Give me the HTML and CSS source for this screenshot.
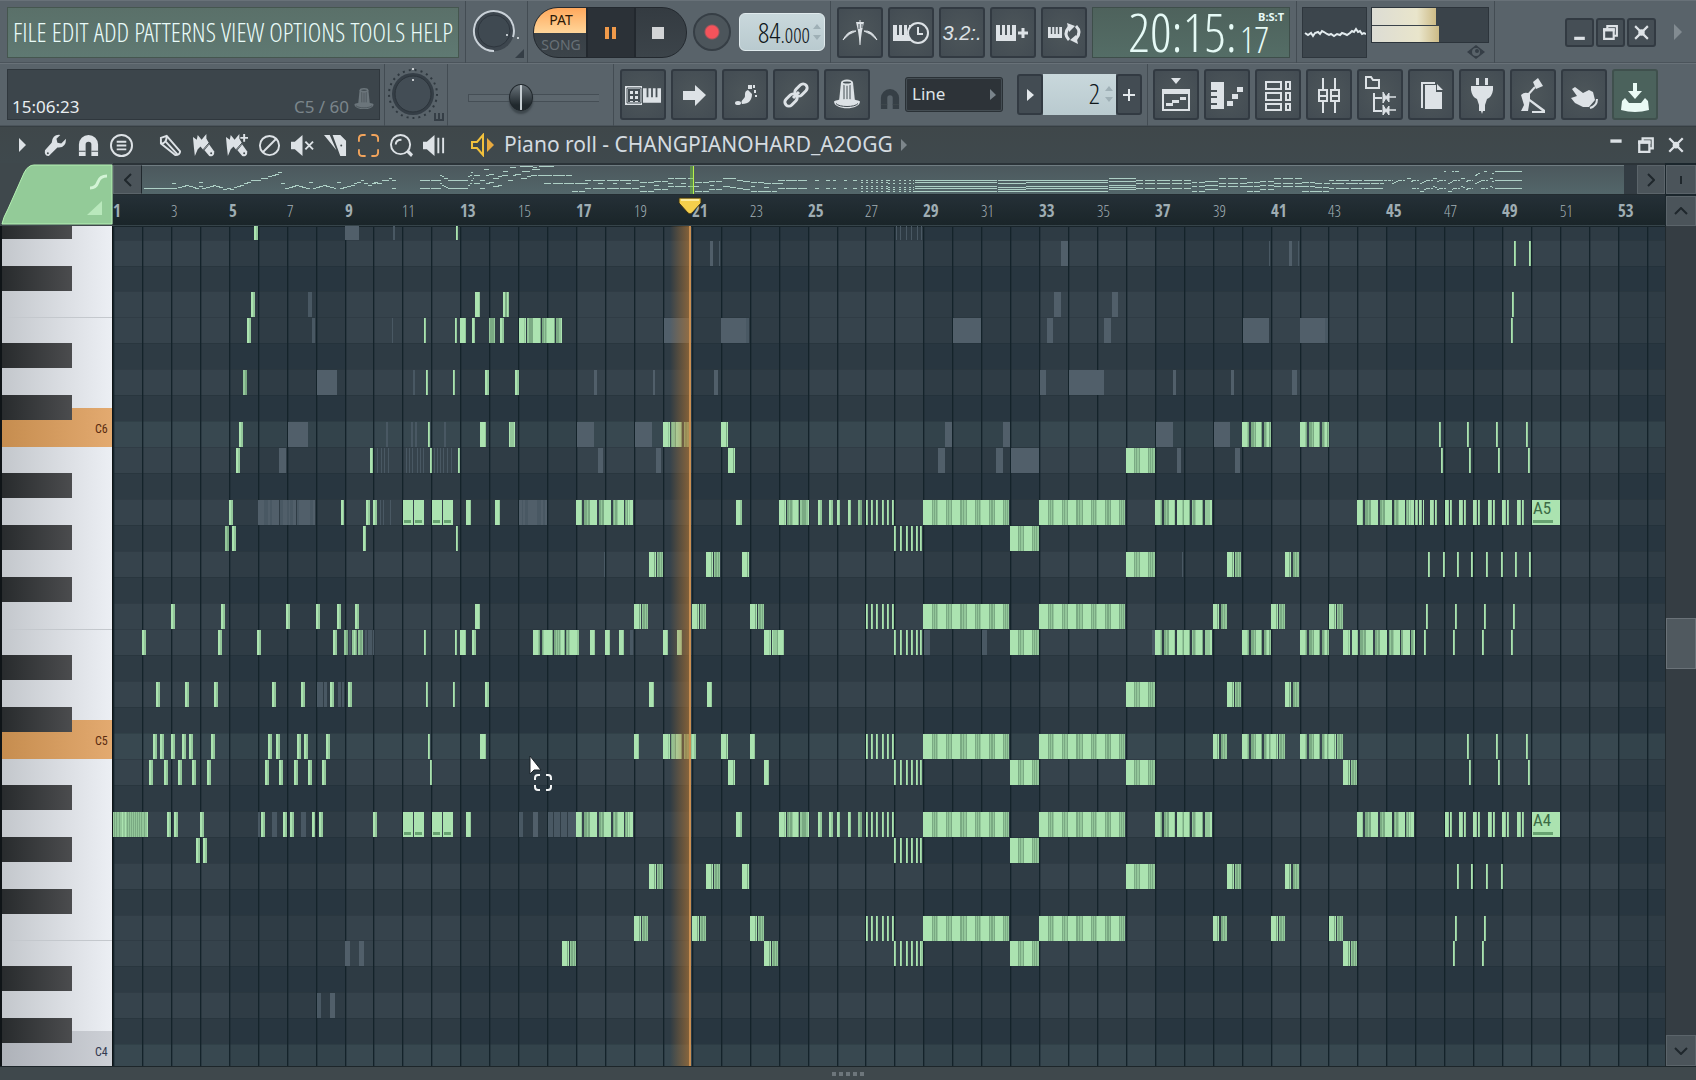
FILE: index.html
```html
<!DOCTYPE html>
<html lang="en">
<head>
<meta charset="utf-8">
<title>Piano roll - CHANGPIANOHARD_A2OGG</title>
<link rel="stylesheet" href="styles.css">
</head>
<body>
<svg class="sprite" aria-hidden="true">
  <symbol id="i-keys" viewBox="0 0 20 16"><path d="M0 0h4v10h2V0h3v10h2V0h3v10h2V0h4v16H0z"/></symbol>
  <symbol id="i-min" viewBox="0 0 16 16"><path d="M3 12h10v3H3z"/></symbol>
  <symbol id="i-max" viewBox="0 0 16 16"><path d="M2 5h9v9H2zM5 4V2h9v9h-2" fill="none" stroke="currentColor" stroke-width="2"/><path d="M1 4h11v3H1z"/></symbol>
  <symbol id="i-close" viewBox="0 0 16 16"><path d="M2 2l12 12M14 2L2 14" stroke="currentColor" stroke-width="2"/><circle cx="8" cy="8" r="3"/></symbol>
  <symbol id="i-magnet" viewBox="0 0 22 24"><path d="M1 23V11a10 10 0 0 1 20 0v12h-7V11a3 3 0 0 0-6 0v12z"/><path d="M1 18h7M14 18h7" stroke="#3f484d" stroke-width="1"/></symbol>
  <symbol id="i-hat" viewBox="0 0 30 32"><path d="M9 4l-2 19h16L21 4z"/><path d="M12 6v15M15 7v14M18 6v15" stroke="#454e54" stroke-width="1"/><ellipse cx="15" cy="4" rx="6" ry="3"/><ellipse cx="15" cy="4" rx="4" ry="1" fill="#454e54"/><path d="M2 23c3-3 23-3 26 0 0 9-26 9-26 0z"/><path d="M4 25c3 4 19 4 22 0" fill="none" stroke="#454e54"/></symbol>
  <symbol id="i-brush" viewBox="0 0 24 24"><path d="M1 3l4 3 1-5 4 5 5-6v7l-9 9-3 7-1-9z"/><path d="M8 12l7-7 3 5-6 7z"/><path d="M13 17l5-6 5 7c1 4-2 6-5 5z"/><path d="M11 17l7-8" stroke="#3f484c" stroke-width="1"/><circle cx="20" cy="20" r="1" fill="#3f484c"/></symbol>
  <symbol id="i-frame" viewBox="0 0 22 24"><path d="M1 8V5q0-4 4-4h3M14 1h3q4 0 4 4v3M21 16v3q0 4-4 4h-3M8 23H5q-4 0-4-4v-3" fill="none" stroke="currentColor" stroke-width="2"/></symbol>
</svg>

<header class="topbar">
  <div class="bar">
    <section class="cell cell-menu">
      <nav class="menu">
        <button>FILE</button><button>EDIT</button><button>ADD</button><button>PATTERNS</button><button>VIEW</button><button>OPTIONS</button><button>TOOLS</button><button>HELP</button>
      </nav>
    </section>
    <section class="cell cell-volume">
      <svg width="60" height="60" role="img" aria-label="Main volume"><circle cx="28" cy="30" r="20" fill="#3d464e"/><circle cx="28" cy="30" r="16" fill="#3f4951" stroke="#2e363e"/><path d="M28 50A20 20 0 1 1 47 36" fill="none" stroke="#c9d1d8" stroke-width="2"/><circle cx="41" cy="34" r="1" fill="#e8eef2"/><circle cx="52" cy="37" r="1" fill="#e8eef2"/><path d="M58 48v9h-9z" fill="#353e46"/></svg>
    </section>
    <section class="cell cell-transport">
      <div class="pod">
        <div class="mode"><button class="mode-pat">PAT</button><button class="mode-song">SONG</button></div>
        <button class="pod-btn pod-pause" aria-label="Pause"><svg width="12" height="12"><path d="M0 0h4v12H0zM7 0h4v12H7z" fill="#f09a4a"/></svg></button>
        <button class="pod-btn pod-stop" aria-label="Stop"><svg width="12" height="12"><path d="M0 0h12v12H0z" fill="#d2d4d6"/></svg></button>
      </div>
      <button class="record" aria-label="Record"></button>
      <div class="tempo" role="spinbutton" aria-label="Tempo" aria-valuenow="84"><span class="tempo-int">84</span><span class="tempo-dec">.000</span><svg width="8" height="16"><path d="M0 5l4-5 4 5zM0 11l4 5 4-5z" fill="#9fb0b6"/></svg></div>
    </section>
    <section class="cell cell-tools">
      <button class="tool" aria-label="Metronome"><svg viewBox="0 0 46 50"><path d="M6 32q5-10 13-9-7 2-13 9zM40 32q-5-10-13-9 7 2 13 9z" stroke="currentColor"/><path d="M19 14h8l-2 9-2 14-2-14z"/><path d="M23 12v25" stroke="currentColor"/><path d="M22 16v5M25 16v4" stroke="#454e54"/></svg></button>
      <button class="tool" aria-label="Wait for input"><svg viewBox="0 0 46 50"><use href="#i-keys" x="5" y="17" width="20" height="16"/><circle cx="30" cy="25" r="10" fill="#454e54" stroke="currentColor" stroke-width="2"/><path d="M30 19v7h5" fill="none" stroke="currentColor" stroke-width="2"/></svg></button>
      <button class="tool tool-count" aria-label="Countdown">3.2:.</button>
      <button class="tool" aria-label="Overdub"><svg viewBox="0 0 46 50"><use href="#i-keys" x="6" y="16" width="20" height="18"/><path d="M33 20v10M28 25h10" stroke="currentColor" stroke-width="3"/></svg></button>
      <button class="tool" aria-label="Loop record"><svg viewBox="0 0 46 50"><use href="#i-keys" x="7" y="17" width="14" height="15"/><path d="M28 32q-6-6 0-13M35 18q6 6 0 13" fill="none" stroke="currentColor" stroke-width="3"/><path d="M26 15l8 3-6 6zM37 36l-8-4 6-5z"/></svg></button>
      <div class="clock"><span class="clock-main">20:15:</span><span class="clock-side"><span class="clock-unit">B:S:T</span><span class="clock-sub">17</span></span></div>
    </section>
    <section class="cell cell-meters">
      <svg class="scope" width="65" height="51" role="img" aria-label="Oscilloscope"><path d="M2 25l3 2 3-2 2 3 2-3 3-1 2 2 2-3 2 1 3 2 2 1 2-1 3 2 3-2 3 1 2-2 3 1 2 1 3-2 2-2 2 1 2-3 2 3 2-1 2 3 2-1 2 1" fill="none" stroke="#e3ebee" stroke-width="2"/></svg>
      <div class="levels"><div class="level-box"><div class="level" style="width:55%"></div><div class="level" style="width:58%"></div></div>
      <svg width="18" height="14"><path d="M0 7l9-7 9 7-9 7z" fill="#353e46"/><circle cx="9" cy="7" r="4" fill="#59636a"/><circle cx="10" cy="6" r="2" fill="#353e46"/></svg></div>
    </section>
    <section class="cell cell-window">
      <button class="win" aria-label="Minimize"><svg viewBox="0 0 16 16"><use href="#i-min"/></svg></button>
      <button class="win" aria-label="Restore"><svg viewBox="0 0 16 16"><use href="#i-max"/></svg></button>
      <button class="win" aria-label="Close"><svg viewBox="0 0 16 16"><use href="#i-close"/></svg></button>
      <svg class="more" width="8" height="16"><path d="M0 0l8 8-8 8z" fill="#828b91"/></svg>
    </section>
  </div>

  <div class="bar bar-low">
    <section class="cell cell-hint">
      <div class="hint"><span class="hint-time">15:06:23</span><span class="hint-note">C5 / 60</span><svg class="hint-hat" width="22" height="28" viewBox="0 0 30 32"><use href="#i-hat"/></svg></div>
    </section>
    <section class="cell cell-pitch">
      <svg width="62" height="62" role="img" aria-label="Main pitch"><circle cx="28" cy="30" r="24" fill="none" stroke="#2f383f" stroke-width="2" stroke-dasharray="2 4"/><circle cx="28" cy="30" r="21" fill="#353e46"/><circle cx="28" cy="30" r="18" fill="#434d55" stroke="#2b333a"/><circle cx="28" cy="16" r="1" fill="#f2f5f7"/><circle cx="28" cy="5" r="1" fill="#f2f5f7"/><path d="M50 49v7h8v-7M54 49v7" fill="none" stroke="#353e46" stroke-width="2"/></svg>
    </section>
    <section class="cell cell-slider"><input class="slider" type="range" min="0" max="100" value="38" aria-label="Song position"></section>
    <section class="cell cell-edit">
      <button class="tool" aria-label="Typing keyboard"><svg viewBox="0 0 46 50"><path d="M5 16h17v19H5z"/><path d="M8 20h12M8 25h12M8 30h12M9 19v13M14 19v13M19 19v13" stroke="#454e54" stroke-width="2"/><path d="M7 18h14v15H7z" fill="none" stroke="#454e54"/><use href="#i-keys" x="23" y="16" width="18" height="19"/></svg></button>
      <button class="tool" aria-label="Step mode"><svg viewBox="0 0 46 50"><path d="M12 21h12v-6l11 10-11 11v-6H12z"/></svg></button>
      <button class="tool" aria-label="Step edit"><svg viewBox="0 0 46 50"><ellipse cx="16" cy="33" rx="3" ry="2"/><path d="M20 34c-2-4 3-5 3-8s0-5 3-6l4 4c0 6-3 10-10 10z"/><path d="M26 15h4v4h-4zM31 15h2v3h-2zM32 20h2v3h-2zM33 25h2v2h-2z"/></svg></button>
      <button class="tool" aria-label="Link"><svg viewBox="0 0 46 50"><g fill="none" stroke="currentColor" stroke-width="3"><rect x="-7" y="-4" width="14" height="8" rx="4" transform="translate(18 30) rotate(-45)"/><rect x="-7" y="-4" width="14" height="8" rx="4" transform="translate(28 20) rotate(-45)"/></g><path d="M20 28l6-6" stroke="currentColor" stroke-width="3"/></svg></button>
      <button class="tool" aria-label="Hat"><svg viewBox="0 0 46 50"><use href="#i-hat" x="8" y="8" width="30" height="33"/></svg></button>
      <svg class="snap-icon" width="20" height="22" viewBox="0 0 22 24"><use href="#i-magnet"/></svg>
      <label class="snap"><select aria-label="Snap"><option>Line</option></select><svg width="6" height="11"><path d="M0 0l6 6-6 5z" fill="#79838a"/></svg></label>
      <div class="pattern"><button class="pattern-btn" aria-label="Pattern menu"><svg width="7" height="12"><path d="M0 0l7 6-7 6z" fill="#e3e8eb"/></svg></button><input class="pattern-num" value="2" aria-label="Pattern"><svg class="pattern-spin" width="8" height="16"><path d="M0 5l4-5 4 5zM0 11l4 5 4-5z" fill="#9fb0b6"/></svg><button class="pattern-btn" aria-label="Add pattern"><svg width="12" height="12"><path d="M6 0v12M0 6h12" stroke="#e3e8eb" stroke-width="2"/></svg></button></div>
    </section>
    <section class="cell cell-views">
      <button class="tool" aria-label="Playlist"><svg viewBox="0 0 46 50"><path d="M18 8h10l-5 6zM9 19h28v5H9z"/><path d="M10 20h26v20H10z" fill="none" stroke="currentColor" stroke-width="2"/><path d="M13 33h7v3h-7zM19 30h7v3h-7zM27 27h6v3h-6z"/></svg></button>
      <button class="tool" aria-label="Piano roll"><svg viewBox="0 0 46 50"><path d="M7 12h13v27H7v-4h6v-2H7v-5h6v-2H7v-4h6v-2H7z"/><path d="M23 31h6v5h-6zM28 24h6v5h-6zM33 17h6v5h-6z"/></svg></button>
      <button class="tool" aria-label="Channel rack"><svg viewBox="0 0 46 50"><path d="M11 12h15v7H11zM31 12h4v7h-4zM11 23h15v7H11zM31 23h4v7h-4zM11 34h15v6H11zM31 34h4v6h-4z" fill="none" stroke="currentColor" stroke-width="2"/></svg></button>
      <button class="tool" aria-label="Mixer"><svg viewBox="0 0 46 50"><path d="M17 8v12M29 8v12M17 32v11M29 32v11M13 20h8v11h-8zM25 20h8v11h-8zM14 26h6M26 26h6" fill="none" stroke="currentColor" stroke-width="2"/></svg></button>
      <button class="tool" aria-label="Browser"><svg viewBox="0 0 46 50"><path d="M9 7h5l2 3h6v8H9zM17 23v19M17 28h8M17 41h8" fill="none" stroke="currentColor" stroke-width="2"/><path d="M26 22l3 5 3-4v4h7-7v5l-3-4-3 5zM26 35l3 5 3-4v4h7-7v5l-3-4-3 4z" stroke="currentColor"/></svg></button>
      <button class="tool" aria-label="Project files"><svg viewBox="0 0 46 50"><path d="M14 38V13h13" fill="none" stroke="currentColor" stroke-width="2"/><path d="M17 15h11v7h6v17H17zM29 14l6 6h-6z"/></svg></button>
      <button class="tool" aria-label="Plugin picker"><svg viewBox="0 0 46 50"><path d="M17 8h3v7h-3zM26 8h3v7h-3zM12 16h22v4q-1 7-6 9l-2 6v6h-2l-1 3-1-3h-2v-6l-2-6q-5-2-6-9z"/></svg></button>
      <button class="tool" aria-label="Performance"><svg viewBox="0 0 46 50"><path d="M23 12l5-4 5 8-7 3z"/><path d="M25 17l-9 10" stroke="currentColor" stroke-width="2"/><path d="M11 25q4-4 9-1v5l-2 12h-7l3-6zM20 29l15 11v3H22v-2h10L19 31z"/></svg></button>
      <button class="tool" aria-label="Touch control"><svg viewBox="0 0 46 50"><path d="M11 19l3-2 8 6 6-3 4 2 2 8-6 7h-6l-8-4-4-5 6-2z"/><path d="M29 38q7-2 7-9" fill="none" stroke="currentColor" stroke-width="2"/></svg></button>
      <button class="tool tool-save" aria-label="Save"><svg viewBox="0 0 46 50"><path d="M21 13h4v8h5l-7 8-7-8h5zM10 31l3-3 4 5h12l4-5 3 3 1 9q-14 4-28 0z"/></svg></button>
    </section>
  </div>
</header>

<div class="titlebar">
  <svg class="t-arrow" width="7" height="14"><path d="M0 0l7 7-7 7z"/></svg>
  <div class="t-group t-group-a">
    <button aria-label="Tools"><svg viewBox="0 0 24 24"><path d="M23 5l-5 5-4-1-1-4 4-4q-8-1-9 8l-7 8q-1 6 4 6l9-9q9 1 9-9z"/><circle cx="4" cy="20" r="1" fill="#3f484c"/></svg></button>
    <button aria-label="Snap"><svg viewBox="0 0 22 24"><use href="#i-magnet"/></svg></button>
    <button aria-label="Options"><svg viewBox="0 0 24 24"><circle cx="12" cy="12" r="11" fill="none" stroke="currentColor" stroke-width="2"/><path d="M7 8h10M7 12h10M7 16h10" stroke="currentColor" stroke-width="2"/></svg></button>
  </div>
  <div class="t-group t-group-b">
    <button aria-label="Draw"><svg viewBox="0 0 24 24"><path d="M2 4l6-2 14 16q0 4-5 4L2 10zM2 10q6 0 6-8M7 8l12 13" fill="none" stroke="currentColor" stroke-width="2"/></svg></button>
    <button aria-label="Paint"><svg viewBox="0 0 24 24"><use href="#i-brush"/></svg></button>
    <button aria-label="Paint sequence"><svg viewBox="0 0 24 24"><use href="#i-brush"/><path d="M20 0v8M16 4h8" stroke="currentColor" stroke-width="2"/></svg></button>
    <button aria-label="Delete"><svg viewBox="0 0 24 24"><circle cx="12" cy="12" r="10" fill="none" stroke="currentColor" stroke-width="2"/><path d="M5 19L19 5" stroke="currentColor" stroke-width="2"/></svg></button>
    <button aria-label="Mute"><svg viewBox="0 0 24 24"><path d="M0 8h4l8-7v22l-8-7H0z"/><path d="M15 8l8 8M23 8l-8 8" stroke="currentColor" stroke-width="2"/></svg></button>
    <button aria-label="Slice"><svg viewBox="0 0 24 24"><path d="M0 1h6l7 16zM9 1h8l6 6v16h-6z"/><circle cx="18" cy="12" r="1" fill="#3f484c"/></svg></button>
    <button class="t-on" aria-label="Select"><svg viewBox="0 0 22 24"><use href="#i-frame"/></svg></button>
    <button aria-label="Zoom"><svg viewBox="0 0 24 24"><circle cx="11" cy="11" r="10" fill="none" stroke="currentColor" stroke-width="2"/><path d="M6 11q0-5 6-5" fill="none" stroke="currentColor" stroke-width="2"/><path d="M17 19l3-2 4 4-2 3z"/></svg></button>
    <button aria-label="Playback"><svg viewBox="0 0 24 24"><path d="M0 8h4l8-7v22l-8-7H0z"/><path d="M16 4v16M21 4v16" stroke="currentColor" stroke-width="2"/></svg></button>
  </div>
  <svg class="t-speaker" width="24" height="24" viewBox="0 0 24 24"><path d="M1 9h5l6-7v20l-6-7H1z" fill="none" stroke="#f2c13c" stroke-width="2"/><path d="M16 5l7 7-7 7z" fill="#e8a93f"/></svg>
  <h1>Piano roll - CHANGPIANOHARD_A2OGG</h1>
  <svg class="t-next" width="6" height="12"><path d="M0 0l6 6-6 6z" fill="#7d868b"/></svg>
  <div class="t-window">
    <button aria-label="Minimize roll"><svg viewBox="0 0 16 16"><path d="M3 3h10v3H3z"/></svg></button>
    <button aria-label="Restore roll"><svg viewBox="0 0 16 16"><use href="#i-max"/></svg></button>
    <button aria-label="Close roll"><svg viewBox="0 0 16 16"><use href="#i-close"/></svg></button>
  </div>
</div>

<main class="roll">
  <div class="corner"><svg width="113" height="62"><path d="M2 61Q3 55 8 46L24 10Q28 2 34 2H112V61z" fill="#93cb98" stroke="#b5f2b4" stroke-width="1"/><path d="M90 25q6 0 8-6t9-6" fill="none" stroke="#d3f4d6" stroke-width="3"/><path d="M102 38v14H87z" fill="#b9e8bc"/></svg></div>
  <div class="scroll-h">
    <button class="sb sb-prev" aria-label="Scroll left"><svg width="8" height="14"><path d="M7 1L1 7l6 6"/></svg></button>
    <div class="minimap"><svg id="minimap" width="100%" height="29"></svg></div>
    <button class="sb" aria-label="Scroll right"><svg width="8" height="14"><path d="M1 1l6 6-6 6"/></svg></button>
  </div>
  <button class="sb sb-zoom" aria-label="Zoom"><svg width="4" height="8"><path d="M2 0v8"/></svg></button>
  <div class="ruler" id="ruler"></div>
  <button class="sb" aria-label="Scroll up"><svg width="14" height="8"><path d="M1 7l6-6 6 6"/></svg></button>
  <svg class="keys" id="keys"></svg>
  <div class="grid"><svg id="grid" width="100%" height="840"></svg>
    <div class="playhead"></div>
    <svg class="cursor" width="26" height="40"><path d="M2 1v18l4-4 7 0z" fill="#fff" stroke="#1c252b" stroke-width="1"/><path d="M7 25v-2q0-3 3-3h2M18 20h2q3 0 3 3v2M23 30v2q0 3-3 3h-2M12 35h-2q-3 0-3-3v-2" fill="none" stroke="#f3f5f6" stroke-width="2"/></svg>
  </div>
  <div class="scroll-v"><div class="thumb"></div><button class="sb" aria-label="Scroll down"><svg width="14" height="8"><path d="M1 1l6 6 6-6"/></svg></button></div>
</main>
<footer class="grip"><i></i><i></i><i></i><i></i><i></i></footer>
<script src="roll.js"></script>
</body>
</html>
```
FILE: styles.css
```css
:root {
  --cond: "Open Sans Condensed Light", "Roboto Condensed", "Noto Sans Condensed", "Liberation Sans Narrow", "Open Sans Condensed", sans-serif;
  --cond-bold: "Open Sans Condensed", "Roboto Condensed", "Liberation Sans Narrow", sans-serif;
  --key: "Roboto Condensed", "Liberation Sans Narrow", "Roboto", sans-serif;
  --ui: "Noto Sans", "Open Sans", sans-serif;
  --line: #434c53;
  --icon: #dde2e6;
}
* { box-sizing: border-box; }
body { margin: 0; min-height: 100vh; display: flex; flex-direction: column; background: #3f484c; font-family: var(--ui); color: var(--icon); overflow: hidden; }
button { border: 0; padding: 0; margin: 0; background: none; color: inherit; font: inherit; display: flex; align-items: center; justify-content: center; }
svg { display: block; fill: currentColor; flex: none; }
.sprite { position: absolute; width: 0; height: 0; }

.topbar { background: #59636a; }
.bar { display: flex; height: 63px; border-top: 1px solid #687178; }
.cell { display: flex; align-items: flex-start; border-right: 1px solid var(--line); box-shadow: inset 0 -1px #4b545b; flex: none; padding-top: 6px; }
.bar-low .cell { padding-top: 5px; }
.cell-menu { width: 466px; padding-left: 7px; }
.bar .cell-volume, .bar .cell-pitch { padding-top: 0; }
.cell-volume { width: 62px; }
.cell-transport { width: 303px; padding-left: 5px; }
.cell-tools { width: 466px; padding-left: 6px; gap: 5px; }
.cell-meters { width: 198px; padding-left: 5px; gap: 4px; }
.cell-window { flex: 1; justify-content: flex-end; align-items: center; padding: 0 14px 0 0; gap: 2px; border-right: 0; }
.cell-hint { width: 385px; padding-left: 7px; }
.cell-pitch { width: 63px; }
.cell-slider { width: 166px; padding: 0 14px 0 20px; align-items: center; }
.cell-edit { width: 534px; padding-left: 6px; gap: 5px; }
.cell-views { flex: 1; padding-left: 5px; gap: 5px; border-right: 0; }

.menu { width: 452px; height: 51px; background: linear-gradient(#5a7069, #5f7972); border: 1px solid #45564f; display: flex; align-items: center; justify-content: space-between; padding: 0 5px 2px; color: #e9fbf8; font: 26px/32px var(--cond); }

.pod { display: flex; width: 154px; height: 51px; border-radius: 25px; overflow: hidden; background: linear-gradient(#343b41, #3c444a); border: 1px solid #23292f; }
.mode { width: 52px; display: flex; flex-direction: column; }
.mode button { flex: 1; font-size: 14px; line-height: 18px; padding-left: 2px; }
.mode .mode-pat { background: linear-gradient(#ffa85c, #ffd69a); color: #2c1a08; }
.mode .mode-song { color: #687076; }
.pod-btn { width: 48px; border-left: 2px solid #22282e; }
.pod-stop { flex: 1; padding-right: 6px; }
.pod-pause { background: #2b3137; }
.record { width: 38px; height: 38px; margin: 6px 8px 0 6px; border-radius: 50%; border: 2px solid #363e45; background: radial-gradient(circle at center, #f5535b 6px, #4c555b 8px); }
.tempo { width: 86px; height: 38px; margin-top: 6px; border-radius: 6px; background: linear-gradient(#c9d8dc, #b9cacf); border: 1px solid #e0eaed; color: #10171b; font-family: var(--cond); display: flex; align-items: baseline; justify-content: flex-end; padding-right: 3px; }
.tempo-int { font-size: 28px; line-height: 36px; }
.tempo-dec { font-size: 21px; line-height: 36px; margin-right: 3px; }
.tempo svg { align-self: center; }

.tool { width: 46px; height: 51px; flex: none; border: 2px solid #323a42; border-radius: 3px; background: radial-gradient(#4d565a, #434c53); }
.tool svg { width: 46px; height: 50px; }
.tool-count { font: italic 20px/24px "Liberation Sans", sans-serif; }
.tool-save { background: #4b625c; border-color: #3f504d; color: #eafaf5; }

.clock { width: 198px; height: 51px; background: linear-gradient(#4e625c, #546d66); border: 1px solid #3e4e4a; color: #e6faf6; font-family: var(--cond); display: flex; justify-content: flex-end; padding-right: 5px; }
.clock-main { font-size: 54px; line-height: 46px; margin-right: 3px; }
.clock-side { display: flex; flex-direction: column; width: 44px; }
.clock-unit { font: 700 11px/14px var(--ui); text-align: right; padding-top: 2px; }
.clock-sub { font-size: 36px; line-height: 32px; }

.scope { background: #3c454c; border: 1px solid #2e363d; }
.levels { width: 118px; display: flex; flex-direction: column; align-items: flex-end; gap: 2px; }
.levels svg { margin-right: 4px; }
.level-box { width: 118px; height: 36px; background: #3a434a; border: 1px solid #2c343b; display: flex; flex-direction: column; gap: 1px; }
.level { flex: 1; background: linear-gradient(90deg, #dcdcd4, #e9e5cb 70%, #cdbb86); }
.win { width: 29px; height: 29px; border: 2px solid #323a42; border-radius: 3px; background: #454e55; }
.win svg { width: 17px; height: 17px; }
.more { margin-left: 16px; }

.hint { width: 373px; height: 51px; background: #3c454b; border: 1px solid #2f373d; display: flex; align-items: flex-end; padding: 0 4px 1px; font-size: 17px; line-height: 22px; }
.hint-time { flex: 1; color: #e8edf0; }
.hint-note { color: #7b858b; }
.hint-hat { color: #6b757b; margin: 0 0 5px 4px; }
.slider { appearance: none; width: 100%; height: 40px; margin: 0; background: linear-gradient(#5d676e, #5d676e) center / 130px 6px no-repeat, linear-gradient(#454e55, #454e55) center / 132px 8px no-repeat; }
.slider::-webkit-slider-thumb { appearance: none; width: 24px; height: 27px; border-radius: 50%; border: 1px solid #20272c; background: linear-gradient(90deg, transparent 10px, #c6ced3 10px, #c6ced3 12px, transparent 12px), linear-gradient(#69737a, #20282d 80%); box-shadow: 0 3px 2px #3e474d; }
.snap-icon { color: #363f46; margin: 19px 0 0 5px; }
.snap { position: relative; width: 98px; height: 35px; margin-top: 8px; }
.snap select { appearance: none; width: 100%; height: 100%; background: #2d3338; border: 2px solid #444d53; outline: 1px solid #2a3136; outline-offset: -1px; border-radius: 3px; color: #dfe4e7; font: 17px/20px var(--ui); padding: 0 5px 2px; }
.snap svg { position: absolute; right: 7px; top: 12px; }
.pattern { position: relative; display: flex; margin: 5px 0 0 9px; height: 41px; }
.pattern-btn { width: 26px; background: #434c53; border: 2px solid #323a42; border-radius: 3px; }
.pattern-num { width: 73px; border: 0; background: linear-gradient(#c9d8dc, #b9cacf); color: #10171b; font: 28px/32px var(--cond); text-align: right; padding: 0 16px 3px 0; }
.pattern-spin { position: absolute; right: 29px; top: 12px; }

.titlebar { height: 37px; display: flex; align-items: center; background: linear-gradient(#3f474a, #3f494d); border-top: 1px solid #363e42; }
.titlebar button { width: 24px; height: 24px; }
.titlebar button svg { width: 23px; height: 23px; }
.t-arrow { margin: 0 22px 0 19px; }
.t-group { display: flex; }
.t-group-a { gap: 9px; margin-right: 25px; margin-left: -5px; }
.t-group-b { gap: 9px; margin-right: 25px; }
.titlebar .t-on { color: #f2a45c; }
.titlebar h1 { margin: 0 8px 2px 9px; font: 21px/26px var(--ui); color: #d4dbe0; white-space: nowrap; }
.t-window { margin-left: auto; display: flex; gap: 6px; padding-right: 8px; }
.titlebar .t-window svg { width: 18px; height: 18px; }

.roll { flex: 1 0 0; min-height: 0; display: grid; grid-template-columns: 113px 1fr 31px; grid-template-rows: 32px 31px 1fr; background: #1b262c; }
.corner { grid-row: 1 / 3; background: #3f484c; }
.scroll-h { display: flex; background: #333c43; border-top: 2px solid #2b3338; border-bottom: 1px solid #232c31; }
.sb { background: #4b545a; border: 1px solid #5b646a; width: 28px; height: 29px; flex: none; }
.sb svg { fill: none; stroke: #1f272c; stroke-width: 2; }
.sb-prev { border-right-color: #20282d; width: 29px; }
.minimap { flex: 1; margin-right: 13px; background: linear-gradient(#4c585d, #53666a); border-top: 1px solid #707d82; overflow: hidden; }
.roll > .sb { width: 30px; margin: 1px; height: 30px; }
.roll > .sb-zoom { margin-top: 2px; height: 29px; }
.ruler { position: relative; overflow: hidden; background: linear-gradient(#253037, #1a2529); border-bottom: 1px solid #36444a; }
.ruler span { position: absolute; bottom: 0; color: #a3b0b6; font: 16px/28px var(--cond); }
.ruler .major { color: #9fadb3; font: 17px/28px var(--cond-bold); }
.marker { position: absolute; left: 565px; top: 2px; }
.keys { width: 113px; height: 100%; background: #0f1417; }
.grid { position: relative; overflow: hidden; background: #2f3c45; }
.playhead { position: absolute; left: 557px; top: 0; width: 21px; height: 100%; background: linear-gradient(90deg, rgba(176, 122, 56, 0), rgba(176, 116, 50, .65)); border-right: 2px solid #c98f52; }
.cursor { position: absolute; left: 415px; top: 529px; }
.scroll-v { display: flex; flex-direction: column; justify-content: flex-end; position: relative; background: #353d43; border-left: 1px solid #20292e; }
.scroll-v .sb { width: 30px; height: 31px; }
.thumb { position: absolute; left: 0; top: 392px; width: 30px; height: 51px; background: #50595f; border: 1px solid #6a7278; }
.grip { height: 14px; display: flex; align-items: center; justify-content: center; gap: 3px; border-top: 1px solid #1d262a; }
.grip i { width: 4px; height: 4px; background: #6d767b; }

.label-key { font: 12px var(--key); }
.label-note { font: 17px var(--key); fill: #3c6b45; }
```
FILE: roll.js
```js
const NS = 'http://www.w3.org/2000/svg';
const KEYS_W = 113, BAR = 28.94, ROW = 25.96, TOP = -12.4, ROWS = 33;
const COLORS = { L: '#abe3b0', m: '#93c79a', d: '#7aaa83', g: '#515f6a', h: '#495863' };

function rect(parent, x, y, w, h, fill) {
  const r = document.createElementNS(NS, 'rect');
  r.setAttribute('x', x); r.setAttribute('y', y);
  r.setAttribute('width', w); r.setAttribute('height', h);
  r.setAttribute('fill', fill);
  parent.appendChild(r);
  return r;
}
function text(parent, x, y, cls, str, fill) {
  const t = document.createElementNS(NS, 'text');
  t.setAttribute('x', x); t.setAttribute('y', y);
  t.setAttribute('class', cls);
  if (fill) t.setAttribute('fill', fill);
  t.textContent = str;
  parent.appendChild(t);
}
const rowY = r => Math.round(TOP + r * ROW);
const barX = b => Math.round(b * BAR);
// Rows count down from G#6; C sits on rows 8, 20 and 32.
const pitch = r => (((8 - r) % 12) + 12) % 12;
const isBlack = r => [1, 3, 6, 8, 10].includes(pitch(r));

// Phrases: each letter is a shade and the number its width; a dot is a rest.
const P = {
  n: 'L2m2', n3: 'L2m1', n5: 'L4m1', n6: 'L5m1', n7: 'L5d1L1', d4: 'm2d2', t: 'L1m1',
  half: 'L5d1L1.1m1d2m1d1m1', halfb: 'L4d1L1.2d2m1d1m2',
  bar: 'L5m1d1.2d3m1d1L5d1.2d2m1L2d1m1',
  solid: 'L8d1m1d1m2d1L8d1m1d1m1d1m2',
  long: 'L9d1m1d1m1d1m1L8d1m1d1m2d1L8d2m1d1m2d1L8d1m1d1m1d1m1L8d1m1d2m1d1L8d1m1d1m1d1m1',
  two: 'L5m1.2d3m1d2L7.2d2m1d2L7.2d1m1d2m1L6.1d1m1d1L1m1L3',
  two2: 'L5m1d1.2d2m1d2L5m1.2L5m1d1L5d1.2m1d2m1L6d1.2m5L2',
  run: 'L5m1L1.1d2m1d2m1L5d1.1m2d4m2L1',
  eight: 'L1m1.3L1m1.3L1m1.4L1m1.3L1m1.3L1m1',
  ten: 'L1m1.4L1m1.4L1m1.3L1m1.3L1m1.2L1m1',
};
const g = w => 'g' + w;
const A_COMMON = [[576, 'two'], [736, 'L4m2'], [779, 'run'], [818, 'n'], [829, 'n'], [837, 'n3'], [848, 'n3'], [858, 'd4'], [866, 'eight'], [923, 'long'], [1039, 'long'], [1155, 'two2']];
const pair = x => [x, 'L3m1.1L1m1'];
const ticks = (...xs) => xs.map(x => [x, 't']);
const hits = (...xs) => xs.map(x => [x, 'n']);
const greys = (...xs) => xs.map(x => [x, 'h1']);

const DATA = {
  '-9': [[508, 'L14'], [528, 'L16']], '-8': [[497, 'L6']], '-7': [[522, 'L4']], '-4': [[470, 'L5'], [520, 'L8']], '-2': [[490, 'L5'], [510, 'L8']],
  '-1': [[1532, 'L28'], [1478, 'L2'], [1486, 'L2'], [1490, 'L4'], [1520, 'L3']],
  0: [[254, 'n'], [345, g(14)], [393, 'h2'], [456, 't'], ...greys(896, 900, 906, 911, 917, 921)],
  1: [[710, g(3)], [719, 'h1'], [1061, g(7)], [1269, 'h1'], [1289, g(3)], [1298, 'h1'], ...ticks(1514, 1529)],
  3: [[251, 'n'], [308, 'h4'], [475, 'n5'], [503, 'L2d2L1m1'], [1054, g(7)], [1112, g(6)], [1512, 't']],
  4: [[247, 'n'], [312, 'h3'], [392, 'h1'], [424, 't'], [455, 't'], [460, 'n6'], [472, 'n3'], [489, 'm1d4m1'], [500, 'n'], [519, 'L5m1L1.1m2d4L7d1.1d2m1d1m1L7d1.1d3m2L1'], [664, g(26)], [721, 'g25h3'], [953, g(28)], [1047, g(6)], [1104, g(7)], [1243, g(26)], [1300, 'g25h3'], [1511, 't']],
  6: [[243, 'd4'], [317, g(20)], [413, 'h2'], [426, 't'], [453, 't'], [485, 'n'], [515, 'n'], [594, g(3)], [653, g(2)], [714, g(4)], [1040, g(6)], [1069, g(35)], [1173, g(3)], [1231, g(3)], [1292, g(5)]],
  8: [[239, 'n'], [288, g(20)], [386, 'h2'], [411, 'h2'], [415, 'h2'], [428, 't'], [444, 'h2'], [480, 'n6'], [509, 'L1m4L1'], [577, g(17)], [635, g(17)], [663, 'L5m1L1.1d1m3d1L5d1.2m1d2m2'], [721, 'n7'], [945, g(7)], [1003, g(7)], [1156, g(17)], [1214, g(16)], [1242, 'bar'], [1300, 'bar'], ...ticks(1439, 1467, 1496, 1526)],
  9: [[236, 'n'], [279, g(7)], [370, 'n3'], ...greys(377, 381, 384, 388, 406, 409, 412, 417, 420, 423, 434, 437, 440, 443, 447, 451), [430, 't'], [458, 't'], [598, g(5)], [656, g(5)], [728, 'n7'], [938, g(7)], [996, g(7)], [1011, g(28)], [1126, 'solid'], [1177, g(4)], [1235, g(5)], ...ticks(1441, 1469, 1498, 1528)],
  11: [[229, 'n'], [258, 'g6h4g2h2g7.1h3g4h2g1h3g3.1h2g11h3g2'], [341, 'n3'], [366, 'n'], [373, 'n'], ...greys(380, 383, 390), [466, 'n5'], [495, 'n5'], [519, 'g3h1g2h3g9h4g2h2g2'], ...A_COMMON, [1357, 'two'], [1415, 'm1L1m1.1L2m1.1L1'], ...[1430, 1445, 1459, 1473, 1488, 1502, 1517].map(pair)],
  12: [[225, 'd4'], [232, 'n'], [363, 'n3'], [456, 't'], [894, 'ten'], [1010, 'solid']],
  13: [[604, 'h1'], [649, 'half'], [706, 'half'], [742, 'n7'], [1126, 'solid'], [1182, 'h1'], [1227, 'half'], [1285, 'halfb'], ...ticks(1428, 1443, 1457, 1471, 1486, 1501, 1515, 1529)],
  15: [...hits(171, 221, 286, 316, 337, 355), [475, 'n5'], [634, 'half'], [692, 'half'], [750, 'half'], [866, 'eight'], [923, 'long'], [1039, 'long'], [1213, 'halfb'], [1271, 'half'], [1329, 'half'], ...ticks(1426, 1455, 1484, 1513)],
  16: [...hits(142, 218, 257, 333), [344, 'm2d2.1h2.1m2L1m1d1.1m2d2m1'], [365, 'h2.1h4.1h1'], [424, 't'], [455, 't'], [460, 'n6'], [472, 'n'], [533, 'L5m1d1.2d1m1L8d1.1d2m1d1m1d1m1L3d1.1d1m1d1m1L7m2'], [590, 'n5'], [605, 'n5'], [619, 'n5'], [630, 'h3'], [663, 'n5'], [677, 'n5'], [764, 'L5m1L1.1L1m4d1L5m1'], [894, 'ten'], [924, 'h6'], [982, 'h5'], [1010, 'solid'], [1152, 'h3'], [1155, 'two2'], [1242, 'bar'], [1300, 'bar'], [1343, 'L5m1L1.1'], [1352, 'two'], [1402, 'd1L7.1d2m1L1'], ...ticks(1424, 1453, 1482, 1511)],
  18: [...hits(156, 185, 214, 272, 301), [317, 'h6.1h3.2'], [338, 'h3.1h2'], ...hits(330, 348), [426, 't'], [453, 't'], [485, 'n'], [649, 'n5'], [707, 'n5'], [1126, 'solid'], [1227, 'half'], [1285, 'halfb']],
  20: [...hits(153, 160, 171, 182, 189, 211, 268, 276, 297, 304, 326), [428, 't'], [480, 'n6'], [634, 'n5'], [663, 'L5m1L1.1d1m3d1L5d1.2m1d2m5L2m2'], [721, 'n7'], [750, 'n5'], [866, 'eight'], [923, 'long'], [1039, 'long'], [1213, 'halfb'], [1242, 'bar'], [1271, 'half'], [1300, 'bar'], [1329, 'half'], ...ticks(1467, 1496, 1526)],
  21: [...hits(149, 164, 178, 192, 207, 265, 279, 294, 308, 322), [430, 't'], [728, 'n7'], [764, 'n5'], [894, 'ten'], [1010, 'solid'], [1126, 'solid'], [1343, 'half'], ...ticks(1469, 1498, 1528)],
  23: [[113, 'm1d1m1d1m2d1m2L1m2L1m1d1m1d1m1d1m1d1m1d1m1d1m1d1m1d1m2d1m2L1'], ...hits(167, 174, 200, 261, 283, 290, 319), [258, 'h2'], [272, 'h5'], [301, 'h5'], [312, 'n3'], [373, 'n'], [466, 'n5'], [519, 'h4'], [533, 'g5'], [548, 'h5.1h6.1h6.1h8'], ...A_COMMON, [1357, 'two'], ...[1445, 1459, 1473, 1488, 1502, 1517].map(pair)],
  24: [...hits(196, 203), [894, 'ten'], [1010, 'solid']],
  25: [[649, 'half'], [706, 'half'], [742, 'n7'], [1126, 'solid'], [1227, 'half'], [1285, 'halfb'], ...ticks(1457, 1471, 1486, 1501)],
  27: [[634, 'half'], [692, 'half'], [750, 'half'], [866, 'eight'], [923, 'long'], [1039, 'long'], [1213, 'halfb'], [1271, 'half'], [1329, 'half'], ...ticks(1455, 1484)],
  28: [[345, g(5)], [359, g(5)], [562, 'half'], [764, 'half'], [894, 'ten'], [922, 'm1'], [1010, 'solid'], [1343, 'half'], ...ticks(1453, 1482)],
  30: [[317, 'h4'], [330, g(5)]],
};
// Notes wide enough to show their velocity strip: row, x, width, label
const WIDE = [];
for (const r of [11, 23]) {
  for (const x of [403, 414, 432, 443]) WIDE.push([r, x, 10, '']);
  WIDE.push([r, 1532, 28, r === 11 ? 'A5' : 'A4']);
}

const grid = document.getElementById('grid');
const mini = document.getElementById('minimap');

for (let r = 0; r < ROWS; r++) {
  const y = rowY(r), h = rowY(r + 1) - y;
  const c = pitch(r) === 0;
  rect(grid, 0, y, '100%', h, isBlack(r) ? '#283640' : c ? '#33434b' : '#2f3c45');
}
for (let b = 0; b < 120; b += 8) {
  for (let r = 0; r < ROWS; r++) {
    const y = rowY(r);
    rect(grid, barX(b), y, barX(b + 4) - barX(b), rowY(r + 1) - y, isBlack(r) ? '#2e3b44' : pitch(r) === 0 ? '#384850' : '#36434c');
  }
}
for (let r = 1; r < ROWS; r++) {
  rect(grid, 0, rowY(r), '100%', 1, 'rgba(20,32,38,.18)');
}
for (let b = 0; b < 120; b++) {
  rect(grid, barX(b), 0, 1, '100%', '#14232a');
  rect(grid, barX(b) + 1, 0, 1, '100%', 'rgba(20,35,42,.35)');
}
rect(grid, 0, 0, '100%', 1, '#18242a');

const miniX = x => Math.round(2 + (x - KEYS_W) * 0.9523);
const miniY = r => Math.round(22 - (23 - r) * 0.69);
function miniNote(r, x, w) { rect(mini, miniX(x), miniY(r), Math.max(1, Math.round(w * 0.9523)), 1, '#aed0c6'); }

for (const [key, list] of Object.entries(DATA)) {
  const r = Number(key);
  for (const [start, code] of list) {
    let x = start;
    for (const [, c, n] of (P[code] || code).matchAll(/([Lmdgh.])(\d+)/g)) {
      const w = Number(n);
      if (c !== '.' && r >= 0) rect(grid, x - KEYS_W, rowY(r) + 1, w, 25, COLORS[c]);
      if ('Lmd'.includes(c)) miniNote(r, x, w);
      x += w;
    }
  }
}
for (const [r, x, w, label] of WIDE) {
  rect(grid, x - KEYS_W, rowY(r) + 1, w, 25, COLORS.L);
  rect(grid, x - KEYS_W + 1, rowY(r) + 21, label ? 20 : w - 3, 3, '#67a271');
  if (label) text(grid, x - KEYS_W + 1, rowY(r) + 15, 'label-note', label);
  miniNote(r, x, w);
}
rect(mini, 548, 0, 4, 29, 'rgba(110,190,60,.5)');
rect(mini, 551, 0, 1, 29, '#b8f04a');

const ruler = document.getElementById('ruler');
for (let b = 1; barX(b - 1) + 20 < ruler.clientWidth; b += 2) {
  const s = document.createElement('span');
  s.textContent = b;
  if (b % 4 === 1) s.className = 'major';
  s.style.left = barX(b - 1) + 'px';
  ruler.appendChild(s);
}
ruler.insertAdjacentHTML('beforeend', '<svg class="marker" width="24" height="18"><path d="M1 1h22v5l-9 10q-2 2-4 0L1 6z" fill="#f4cf4c" stroke="#3b3216"/><path d="M3 3h18" stroke="#fdeb9c" stroke-width="2"/></svg>');

const keys = document.getElementById('keys');
keys.innerHTML = '<defs><linearGradient id="kw"><stop offset="0" stop-color="#c3c7cc"/><stop offset=".6" stop-color="#dcdfe4"/><stop offset="1" stop-color="#eceff4"/></linearGradient><linearGradient id="kb"><stop offset="0" stop-color="#282b2d"/><stop offset="1" stop-color="#4b4c4e"/></linearGradient><linearGradient id="ko"><stop offset="0" stop-color="#c68d4f"/><stop offset="1" stop-color="#e3aa70"/></linearGradient><linearGradient id="kc"><stop offset="0" stop-color="#aeb2b9"/><stop offset="1" stop-color="#cdd0d6"/></linearGradient></defs>';
rect(keys, 2, 0, 110, 840, 'url(#kw)');
for (let r = 0; r < ROWS; r++) {
  if (pitch(r) === 5) rect(keys, 2, rowY(r + 1), 110, 1, '#c4c8cd');
  if (pitch(r) === 0) {
    rect(keys, 2, rowY(r) - 13, 110, 39, r === 32 ? 'url(#kc)' : 'url(#ko)');
    text(keys, 95, rowY(r) + 12, 'label-key', 'C' + (r === 8 ? 6 : r === 20 ? 5 : 4), r === 32 ? '#333a50' : '#5a2c10');
  }
}
for (let r = 0; r < ROWS; r++) if (isBlack(r)) rect(keys, 2, rowY(r), 70, 25, 'url(#kb)');
```
